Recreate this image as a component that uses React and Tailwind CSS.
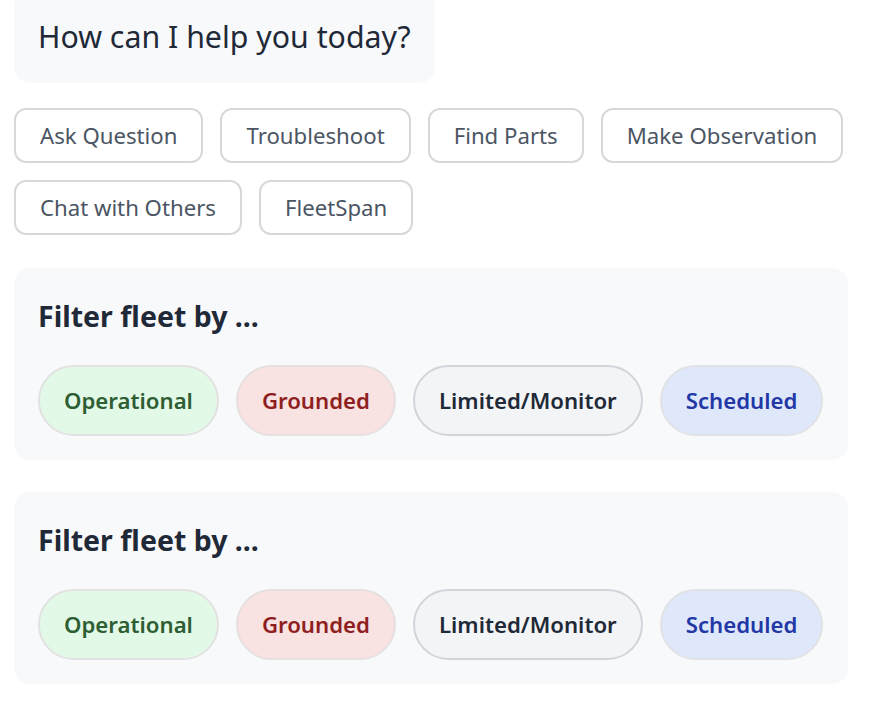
const font = { fontFamily: '"Noto Sans", "Open Sans", sans-serif' };

const actions = ["Ask Question", "Troubleshoot", "Find Parts", "Make Observation", "Chat with Others", "FleetSpan"];

const statuses = [
  { label: "Operational", cls: "bg-[#e3f9e7] border-[#e2e2e2] text-[#2d5e34]" },
  { label: "Grounded", cls: "bg-[#f8e2e2] border-[#e6e0e0] text-[#8f1f1f]" },
  { label: "Limited/Monitor", cls: "bg-[#f3f4f6] border-[#d1d5db] text-[#1f2937]" },
  { label: "Scheduled", cls: "bg-[#dfe8fa] border-[#e0e2e6] text-[#2337a6]" },
];

function FilterCard() {
  return (
    <div className="bg-[#f8f9fb] rounded-[16px] p-6 w-[834px]">
      <h2 className="text-[28.5px] leading-[49px] font-bold text-[#1f2937]">Filter fleet by ...</h2>
      <div className="mt-6 flex gap-[17px]">
        {statuses.map((s) => (
          <button
            key={s.label}
            className={`rounded-full border-2 px-6 py-4 text-[22.2px] leading-[35px] font-semibold ${s.cls}`}
          >
            {s.label}
          </button>
        ))}
      </div>
    </div>
  );
}

export default function App() {
  return (
    <div className="min-h-screen bg-white px-[14px] overflow-hidden" style={font}>
      <div className="w-fit -mt-[10px] bg-[#f8f9fb] rounded-[16px] px-6 pt-6 pb-6">
        <p className="text-[30.3px] leading-[45px] text-[#1f2937]">How can I help you today?</p>
      </div>

      <div className="mt-[25px] flex flex-wrap gap-[17px] w-[850px]">
        {actions.map((a) => (
          <button
            key={a}
            className="rounded-[12px] border-2 border-[#d6d8dc] bg-white px-6 py-2 text-[22.2px] leading-[35px] text-[#4b5563]"
          >
            {a}
          </button>
        ))}
      </div>

      <div className="mt-[33px] flex flex-col gap-8">
        <FilterCard />
        <FilterCard />
      </div>
    </div>
  );
}
